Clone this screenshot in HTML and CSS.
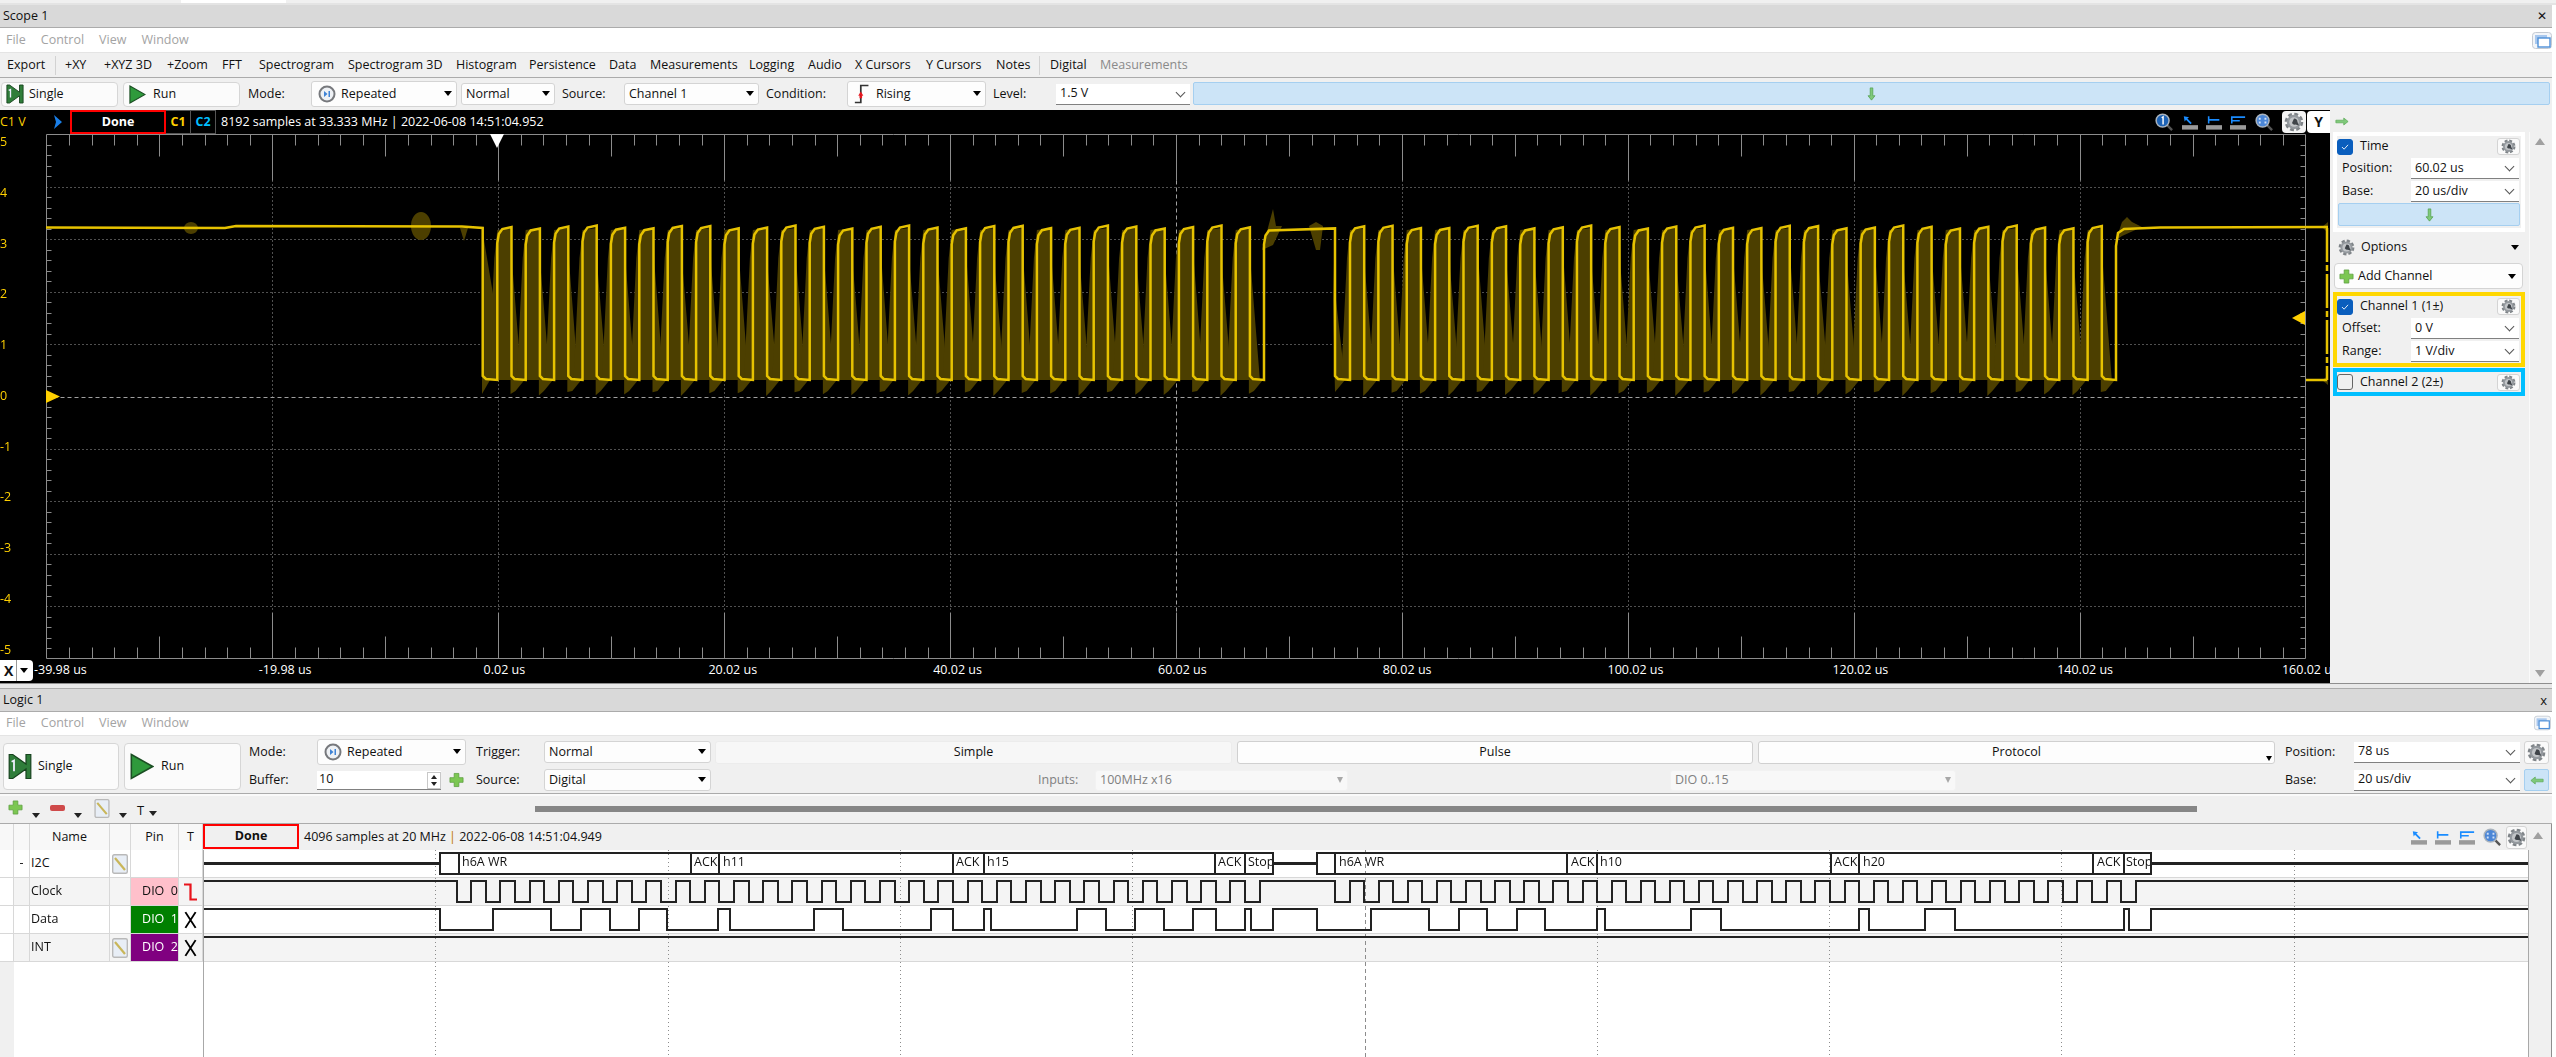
FILE: index.html
```html
<!DOCTYPE html>
<html>
<head>
  <title>Scope and Logic</title>
  <link rel="stylesheet" href="styles.css">
</head>
<body>
  <svg class="defs" width="0" height="0">
    <symbol id="gear" viewBox="0 0 20 20">
      <circle cx="10" cy="10" r="7.800" fill="none" stroke="#7f8488" stroke-width="3" stroke-dasharray="3.800 2.330"/>
      <circle cx="10" cy="10" r="7.200" fill="#94999e"/>
      <circle cx="10" cy="10" r="4.800" fill="#c2c5c8"/>
      <path d="M10 6.500a3.500 3.500 0 0 1 3.500 3.500l1.500 3.500-3.500-1a3 3 0 0 1-3.500-1.500z" fill="#3f4449"/>
    </symbol>
    <symbol id="plus" viewBox="0 0 16 16">
      <path d="M5.500 1h5v4.500h4.500v5h-4.500v4.500h-5v-4.500h-4.500v-5h4.500z" fill="#7cc752" stroke="#5a9c3c" stroke-width=".8"/>
    </symbol>
    <symbol id="arrow-down" viewBox="0 0 10 16">
      <path d="M3.500 1h3v9h2.500l-4 5-4-5h2.500z" fill="#7fc97a" stroke="#4f9e4a" stroke-width=".8"/>
    </symbol>
    <symbol id="arrow-side" viewBox="0 0 16 10">
      <path d="M1 3.500h9v-2.500l5 4-5 4v-2.500h-9z" fill="#7fc97a" stroke="#5aa955" stroke-width=".8"/>
    </symbol>
    <symbol id="single" viewBox="0 0 20 22">
      <path d="M1 1h3l11 8v-8h4v20h-4v-8l-11 8h-3z" fill="#2f7d3a" stroke="#17431e" stroke-width="1"/>
      <path d="M3 7l2-1v9" fill="none" stroke="#eef" stroke-width="1.500"/>
    </symbol>
    <symbol id="run" viewBox="0 0 18 20">
      <path d="M1 1l16 9-16 9z" fill="#2f9a3c" stroke="#1c4f24" stroke-width="1.200"/>
    </symbol>
    <symbol id="repeat" viewBox="0 0 18 18">
      <circle cx="9" cy="9" r="7.500" fill="#eef1f5" stroke="#77797d" stroke-width="2"/>
      <path d="M6 6l3.500 3-3.500 3z M10.500 6h1.500v6h-1.500z" fill="#3f83d6"/>
    </symbol>
    <symbol id="rising" viewBox="0 0 20 24">
      <path d="M1 22h7v-20h9" fill="none" stroke="#333" stroke-width="2"/>
      <path d="M8 9l3 5h-6z" fill="#e8141c"/>
      <path d="M6.500 14h3v3h-3z" fill="#e8141c"/>
    </symbol>
    <symbol id="pencil" viewBox="0 0 16 20">
      <rect x=".7" y=".7" width="14.600" height="18.600" rx="1.500" fill="#e8eef6" stroke="#b9b9b9" stroke-width="1.400"/>
      <path d="M3 4l10 12" stroke="#c9b65a" stroke-width="2.200"/>
    </symbol>
    <symbol id="zoom-in" viewBox="0 0 20 20">
      <path d="M12 12l6 6" stroke="#555" stroke-width="2.500"/>
      <circle cx="8" cy="8" r="6.800" fill="#1d62b5" stroke="#a9b3bd" stroke-width="1.600"/>
      <path d="M7 5l1.500-1v8" fill="none" stroke="#fff" stroke-width="1.500"/>
    </symbol>
    <symbol id="zoom-out" viewBox="0 0 20 20">
      <path d="M12 12l6 6" stroke="#555" stroke-width="2.500"/>
      <circle cx="8" cy="8" r="6.800" fill="#4b86d6" stroke="#a9b3bd" stroke-width="1.600"/>
      <path d="M4 5h2v2h-2z M10 5h2v2h-2z M4 9h2v2h-2z M10 9h2v2h-2z" fill="#cfe0f7"/>
    </symbol>
    <symbol id="ruler-arrow" viewBox="0 0 18 16">
      <path d="M0 11h18v5h-18z" fill="#9a9a9a"/>
      <path d="M2 1l6 1-2 1.500 5 5-1.500 1.500-5-5-1.500 2z" fill="#1a8cff"/>
    </symbol>
    <symbol id="ruler-one" viewBox="0 0 18 16">
      <path d="M0 11h18v5h-18z" fill="#9a9a9a"/>
      <path d="M3 1v8M3 5h12" stroke="#1a8cff" stroke-width="1.800"/>
    </symbol>
    <symbol id="ruler-two" viewBox="0 0 18 16">
      <path d="M0 11h18v5h-18z" fill="#9a9a9a"/>
      <path d="M2 1v8M2 2h15M2 6h9" stroke="#1a8cff" stroke-width="1.800"/>
    </symbol>
    <symbol id="windows" viewBox="0 0 20 17">
      <rect x=".5" y=".5" width="19" height="16" rx="3" fill="#f2f5f9" stroke="#c4cad2"/>
      <rect x="3" y="3" width="12" height="9" fill="#a9c8ee"/>
      <rect x="6" y="6" width="12" height="9" fill="#fff" stroke="#4d8fd8" stroke-width="1.400"/>
    </symbol>
    <symbol id="check" viewBox="0 0 16 16">
      <path d="M4.500 8l2.500 2.500 4.500-5" fill="none" stroke="#fff" stroke-width="1"/>
    </symbol>
    <symbol id="cross" viewBox="0 0 14 24" preserveAspectRatio="none">
      <path d="M1.500 1.500l11 21M12.500 1.500l-11 21" stroke="#000" stroke-width="2"/>
    </symbol>
    <symbol id="edge" viewBox="0 0 14 24" preserveAspectRatio="none">
      <path d="M0 2h7v20h7" fill="none" stroke="#e8141c" stroke-width="2.400"/>
    </symbol>
  </svg>

  <div class="top-strip"><span class="top-tab"></span></div>

  <section class="scope">
    <div class="title-bar"><span>Scope 1</span><span class="close-x">✕</span></div>
    <div class="menu-bar">
      <span>File</span><span>Control</span><span>View</span><span>Window</span>
      <svg class="windows-icon"><use href="#windows"/></svg>
    </div>
    <div class="tool-bar">
      <span class="sep-export">Export</span>
      <span>+XY</span><span>+XYZ 3D</span><span>+Zoom</span><span>FFT</span><span>Spectrogram</span>
      <span>Spectrogram 3D</span><span>Histogram</span><span>Persistence</span><span>Data</span>
      <span>Measurements</span><span>Logging</span><span>Audio</span><span>X Cursors</span>
      <span>Y Cursors</span><span class="sep-notes">Notes</span>
      <span>Digital</span><span class="muted">Measurements</span>
    </div>
    <div class="scope-controls">
      <button class="btn btn-single"><svg class="ico-single"><use href="#single"/></svg>Single</button>
      <button class="btn btn-run"><svg class="ico-run"><use href="#run"/></svg>Run</button>
      <span class="lbl lbl-mode">Mode:</span>
      <div class="combo combo-tall w-repeated"><svg class="ico-repeat"><use href="#repeat"/></svg>Repeated<i class="drop"></i></div>
      <div class="combo w-normal">Normal<i class="drop"></i></div>
      <span class="lbl lbl-source">Source:</span>
      <div class="combo w-source">Channel 1<i class="drop"></i></div>
      <span class="lbl lbl-cond">Condition:</span>
      <div class="combo combo-tall w-rising"><svg class="ico-rising"><use href="#rising"/></svg>Rising<i class="drop"></i></div>
      <span class="lbl lbl-level">Level:</span>
      <div class="field w-level">1.5 V<i class="chev"></i></div>
      <div class="blue-btn trigger-btn"><svg class="ico-down"><use href="#arrow-down"/></svg></div>
    </div>

    <div class="scope-body">
      <div class="plot-area">
        <div class="scope-status">
          <span class="unit">C1 V</span>
          <svg class="chevron" viewBox="0 0 12 14"><path d="M2 0l8 7-8 7 2-7z" fill="#1a7fe8"/></svg>
          <span class="done done-dark">Done</span>
          <span class="chan-tag c1">C1</span><span class="chan-tag c2">C2</span>
          <span class="status-text">8192 samples at 33.333 MHz | 2022-06-08 14:51:04.952</span>
          <div class="view-icons">
            <svg class="ico-zoom"><use href="#zoom-in"/></svg>
            <svg class="ico-ruler"><use href="#ruler-arrow"/></svg>
            <svg class="ico-ruler"><use href="#ruler-one"/></svg>
            <svg class="ico-ruler"><use href="#ruler-two"/></svg>
            <svg class="ico-zoom"><use href="#zoom-out"/></svg>
            <span class="tab-btn"><svg class="ico-gear-big"><use href="#gear"/></svg></span>
            <span class="tab-btn tab-y">Y</span>
          </div>
        </div>
        <canvas id="scopeCanvas" width="2330" height="526"></canvas>
        <div class="y-labels">
          <span>5</span><span>4</span><span>3</span><span>2</span><span>1</span><span>0</span>
          <span>-1</span><span>-2</span><span>-3</span><span>-4</span><span>-5</span>
        </div>
        <div class="x-labels">
          <span>-39.98 us</span><span>-19.98 us</span><span>0.02 us</span><span>20.02 us</span>
          <span>40.02 us</span><span>60.02 us</span><span>80.02 us</span><span>100.02 us</span>
          <span>120.02 us</span><span>140.02 us</span><span>160.02 us</span>
        </div>
        <div class="x-btn"><b>X</b><i class="drop"></i></div>
      </div>

      <aside class="side-panel">
        <div class="side-head"><svg class="ico-side"><use href="#arrow-side"/></svg></div>
        <div class="side-body">
          <div class="side-list">
            <div class="card card-time">
              <div class="card-head">
                <span class="check on"><svg><use href="#check"/></svg></span>
                <span>Time</span>
                <span class="gear-btn"><svg><use href="#gear"/></svg></span>
              </div>
              <div class="card-row"><span>Position:</span><div class="field">60.02 us<i class="chev"></i></div></div>
              <div class="card-row"><span>Base:</span><div class="field">20 us/div<i class="chev"></i></div></div>
              <div class="blue-btn time-btn"><svg class="ico-down"><use href="#arrow-down"/></svg></div>
            </div>
            <div class="options">
              <svg class="ico-options"><use href="#gear"/></svg><span>Options</span><i class="drop"></i>
            </div>
            <div class="add-channel">
              <svg class="ico-plus"><use href="#plus"/></svg><span>Add Channel</span><i class="drop"></i>
            </div>
            <div class="card card-c1">
              <div class="card-head">
                <span class="check on"><svg><use href="#check"/></svg></span>
                <span>Channel 1 (1±)</span>
                <span class="gear-btn"><svg><use href="#gear"/></svg></span>
              </div>
              <div class="card-row"><span>Offset:</span><div class="field">0 V<i class="chev"></i></div></div>
              <div class="card-row"><span>Range:</span><div class="field">1 V/div<i class="chev"></i></div></div>
            </div>
            <div class="card card-c2">
              <div class="card-head">
                <span class="check"></span>
                <span>Channel 2 (2±)</span>
                <span class="gear-btn"><svg><use href="#gear"/></svg></span>
              </div>
            </div>
          </div>
          <div class="scroll-col"><i class="tri-up"></i><i class="tri-down"></i></div>
        </div>
      </aside>
    </div>
    <div class="scope-foot"></div>
  </section>

  <section class="logic">
    <div class="title-bar"><span>Logic 1</span><span class="close-x close-small">x</span></div>
    <div class="menu-bar menu-logic">
      <span>File</span><span>Control</span><span>View</span><span>Window</span>
      <svg class="windows-icon windows-tall"><use href="#windows"/></svg>
    </div>
    <div class="logic-controls">
      <button class="btn big-btn col-single"><svg class="ico-single-big"><use href="#single"/></svg>Single</button>
      <button class="btn big-btn col-run"><svg class="ico-run-big"><use href="#run"/></svg>Run</button>
      <span class="lbl col-l1">Mode:</span>
      <div class="combo combo-tall col-c1"><svg class="ico-repeat"><use href="#repeat"/></svg>Repeated<i class="drop"></i></div>
      <span class="lbl col-l2">Trigger:</span>
      <div class="combo col-c2">Normal<i class="drop"></i></div>
      <div class="tab tab-off col-t1">Simple</div>
      <div class="tab col-t2">Pulse</div>
      <div class="tab col-t3">Protocol<i class="drop"></i></div>
      <span class="lbl col-l3">Position:</span>
      <div class="field col-f">78 us<i class="chev"></i></div>
      <span class="gear-btn gear-tall col-g"><svg><use href="#gear"/></svg></span>

      <span class="lbl col-l1 row-2">Buffer:</span>
      <div class="buffer col-c1 row-2">
        <div class="field spin">10<span class="spin-btns"><i class="up"></i><i class="dn"></i></span></div>
        <svg class="ico-plus-small"><use href="#plus"/></svg>
      </div>
      <span class="lbl col-l2 row-2">Source:</span>
      <div class="combo col-c2 row-2">Digital<i class="drop"></i></div>
      <div class="inputs row-2">
        <span class="lbl-off">Inputs:</span>
        <div class="combo combo-off w-inputs">100MHz x16<i class="drop"></i></div>
        <div class="combo combo-off w-dio">DIO 0..15<i class="drop"></i></div>
      </div>
      <span class="lbl col-l3 row-2">Base:</span>
      <div class="field col-f row-2">20 us/div<i class="chev"></i></div>
      <div class="blue-btn back-btn col-g row-2"><svg class="ico-side"><use href="#arrow-side"/></svg></div>
    </div>
    <div class="logic-tools">
      <svg class="ico-plus"><use href="#plus"/></svg><i class="mini-drop"></i>
      <span class="ico-minus"></span><i class="mini-drop"></i>
      <svg class="ico-pencil-lg"><use href="#pencil"/></svg><i class="mini-drop"></i>
      <span class="tool-t">T</span><i class="mini-drop mini-t"></i>
      <div class="h-track"></div>
    </div>

    <div class="logic-body">
      <div class="logic-main">
        <div class="logic-head">
          <span class="cell c-gut"></span><span class="cell c-exp"></span>
          <span class="cell c-name">Name</span><span class="cell c-edit"></span>
          <span class="cell c-pin">Pin</span><span class="cell c-trig">T</span>
          <span class="done">Done</span>
          <span class="status-text dark">4096 samples at 20 MHz <em>|</em> 2022-06-08 14:51:04.949</span>
          <div class="logic-icons">
            <svg class="ico-ruler"><use href="#ruler-arrow"/></svg>
            <svg class="ico-ruler"><use href="#ruler-one"/></svg>
            <svg class="ico-ruler"><use href="#ruler-two"/></svg>
            <svg class="ico-zoom"><use href="#zoom-out"/></svg>
            <span class="gear-btn gear-tall"><svg><use href="#gear"/></svg></span>
          </div>
        </div>
        <div class="logic-table">
          <div class="rows">
            <div class="row row-white">
              <span class="cell c-gut"></span><span class="cell c-exp">-</span>
              <span class="cell c-name left">I2C</span>
              <span class="cell c-edit"><svg class="ico-pencil"><use href="#pencil"/></svg></span>
              <span class="cell c-pin"></span><span class="cell c-trig"></span>
            </div>
            <div class="row row-grey">
              <span class="cell c-gut"></span><span class="cell c-exp"></span>
              <span class="cell c-name left">Clock</span><span class="cell c-edit"></span>
              <span class="cell c-pin pin-pink">DIO  0</span>
              <span class="cell c-trig"><svg class="ico-trig"><use href="#edge"/></svg></span>
            </div>
            <div class="row row-white">
              <span class="cell c-gut"></span><span class="cell c-exp"></span>
              <span class="cell c-name left">Data</span><span class="cell c-edit"></span>
              <span class="cell c-pin pin-green">DIO  1</span>
              <span class="cell c-trig"><svg class="ico-trig"><use href="#cross"/></svg></span>
            </div>
            <div class="row row-grey">
              <span class="cell c-gut"></span><span class="cell c-exp"></span>
              <span class="cell c-name left">INT</span>
              <span class="cell c-edit"><svg class="ico-pencil"><use href="#pencil"/></svg></span>
              <span class="cell c-pin pin-purple">DIO  2</span>
              <span class="cell c-trig"><svg class="ico-trig"><use href="#cross"/></svg></span>
            </div>
          </div>
          <div class="empty-rows"><span class="empty-gut"></span></div>
          <div class="logic-plot" id="logicPlot">
            <canvas id="logicCanvas" width="2325" height="207"></canvas>
          </div>
        </div>
      </div>
      <div class="scroll-col scroll-logic"><i class="tri-up"></i></div>
    </div>
  </section>

  <script src="script.js"></script>
</body>
</html>
```

FILE: styles.css
```css
* {
  box-sizing: border-box;
}

html, body {
  margin: 0;
  height: 1057px;
  overflow: hidden;
}

body {
  width: 2556px;
  background: #fff;
  color: #111;
  font-family: "Open Sans", "Noto Sans", sans-serif;
  font-size: 12.5px;
  line-height: 1;
}

.defs {
  position: absolute;
}

svg {
  display: block;
  flex: none;
}

i {
  display: block;
  flex: none;
}

.top-strip {
  height: 5px;
  background: #f0f0f0;
  border-bottom: 2px solid #e4e4e4;
  padding-left: 181px;
}

.top-tab {
  display: block;
  width: 105px;
  height: 3px;
  background: #fff;
}

.title-bar {
  height: 23px;
  width: 2552px;
  display: flex;
  align-items: center;
  justify-content: space-between;
  padding: 0 3px;
  background: #d9d9d9;
  border-bottom: 1px solid #ababab;
}

.close-x {
  font-size: 12px;
  margin-right: 2px;
}

.close-small {
  font-size: 13px;
}

.menu-bar {
  height: 25px;
  width: 2552px;
  display: flex;
  align-items: center;
  gap: 15px;
  padding: 1px 0 1px 6px;
  background: #fff;
  border-bottom: 1px solid #e4e4e4;
  color: #a3a3a3;
}

.menu-logic {
  height: 24px;
  padding-top: 0;
}

.windows-icon {
  width: 20px;
  height: 17px;
  margin-left: auto;
}

.windows-tall {
  width: 17px;
  height: 22px;
  margin-right: 1px;
}

.tool-bar {
  height: 25px;
  width: 2552px;
  display: grid;
  grid-template-columns: 58px 39px 63px 55px 37px 89px 108px 73px 80px 41px 99px 59px 47px 71px 70px 54px 50px 1fr;
  align-items: center;
  padding-left: 7px;
  background: #f0f0f0;
  border-bottom: 1px solid #ababab;
  white-space: nowrap;
}

.sep-export, .sep-notes {
  position: relative;
}

.sep-export::after, .sep-notes::after {
  content: "";
  position: absolute;
  top: -3px;
  width: 1px;
  height: 19px;
  background: #d2d2d2;
}

.sep-export::after { left: 48px; }
.sep-notes::after { left: 43px; }

.muted {
  color: #8a8a8a;
}

.scope-controls {
  height: 32px;
  width: 2552px;
  display: flex;
  align-items: center;
  padding-left: 1px;
  background: #f0f0f0;
  white-space: nowrap;
}

.btn {
  display: flex;
  align-items: center;
  gap: 5px;
  height: 25px;
  width: 117px;
  padding: 0 0 0 4px;
  background: #fbfbfb;
  border: 1px solid #d6d6d6;
  border-radius: 4px;
  font: inherit;
  color: inherit;
}

.btn-run {
  margin-left: 5px;
  gap: 7px;
  padding-left: 5px;
}

.ico-single {
  width: 18px;
  height: 20px;
}

.ico-run {
  width: 17px;
  height: 19px;
}

.lbl {
  white-space: nowrap;
}

.lbl-mode { margin-left: 8px; width: 63px; }
.lbl-source { margin-left: 7px; width: 62px; }
.lbl-cond { margin-left: 7px; width: 81px; }
.lbl-level { margin-left: 7px; width: 63px; }

.combo {
  position: relative;
  display: flex;
  align-items: center;
  gap: 5px;
  height: 22px;
  padding-left: 4px;
  background: #fdfdfd;
  border: 1px solid #d4d4d4;
  border-radius: 3px;
  flex: none;
}

.combo-tall {
  height: 26px;
  padding-left: 6px;
}

.drop {
  width: 0;
  height: 0;
  border-left: 4px solid transparent;
  border-right: 4px solid transparent;
  border-top: 5px solid #000;
}

.combo .drop {
  position: absolute;
  right: 4px;
  top: 50%;
  margin-top: -3px;
}

.w-repeated { width: 146px; }
.w-normal { width: 94px; margin-left: 4px; }
.w-source { width: 135px; }
.w-rising { width: 139px; }

.ico-repeat {
  width: 18px;
  height: 18px;
}

.ico-rising {
  width: 17px;
  height: 22px;
}

.field {
  position: relative;
  display: flex;
  align-items: center;
  height: 21px;
  padding-left: 4px;
  background: #fff;
  border-bottom: 1px solid #808080;
  flex: none;
}

.w-level {
  width: 134px;
  margin-right: 3px;
}

.chev {
  position: absolute;
  right: 6px;
  top: 5px;
  width: 7px;
  height: 7px;
  border-right: 1px solid #555;
  border-bottom: 1px solid #555;
  transform: rotate(45deg);
}

.blue-btn {
  display: flex;
  align-items: center;
  justify-content: center;
  background: #cce4f7;
  border: 1px solid #a5cff0;
  border-radius: 2px;
}

.trigger-btn {
  width: 1357px;
  height: 23px;
  margin-bottom: 1px;
}

.ico-down {
  width: 9px;
  height: 14px;
}

.scope-body {
  display: flex;
  height: 573px;
}

.plot-area {
  position: relative;
  width: 2330px;
  flex: none;
  background: #000;
  color: #fff;
  overflow: hidden;
}

.scope-status {
  height: 24px;
  display: flex;
  align-items: center;
  white-space: nowrap;
}

.unit {
  width: 52px;
  color: #ffd000;
}

.chevron {
  width: 12px;
  height: 14px;
  margin-right: 6px;
}

.done {
  display: flex;
  align-items: center;
  justify-content: center;
  font-weight: 700;
  border: 2px solid #f00;
  flex: none;
}

.done-dark {
  width: 96px;
  height: 24px;
  background: #000;
  color: #fff;
}

.chan-tag {
  width: 25px;
  height: 24px;
  display: flex;
  align-items: center;
  justify-content: center;
  font-weight: 700;
  border: 1px solid #555;
  border-left: 0;
}

.c1 { color: #ffd000; }
.c2 { color: #00bfff; }

.status-text {
  margin-left: 5px;
}

.view-icons {
  margin-left: auto;
  display: flex;
  align-items: center;
  height: 24px;
}

.ico-zoom {
  width: 19px;
  height: 19px;
}

.ico-ruler {
  width: 16px;
  height: 15px;
  margin-left: 8px;
}

.view-icons .ico-zoom:nth-child(5) {
  margin-left: 9px;
  margin-right: 8px;
}

.tab-btn {
  width: 24px;
  height: 22px;
  margin-right: 1px;
  display: flex;
  align-items: center;
  justify-content: center;
  background: #f4f4f4;
  border-radius: 4px;
}

.tab-y {
  width: 23px;
  margin-right: 0;
  background: #fff;
  color: #111;
  font-weight: 700;
  font-size: 14px;
  border-radius: 4px 0 0 4px;
}

.ico-gear-big {
  width: 20px;
  height: 20px;
}

#scopeCanvas {
  display: block;
}

.y-labels {
  position: absolute;
  left: 0;
  top: 26px;
  height: 520px;
  display: flex;
  flex-direction: column;
  justify-content: space-between;
  color: #ffd000;
}

.x-labels {
  display: grid;
  grid-template-columns: repeat(11, 224.800px);
  padding: 4px 0 0 34px;
  white-space: nowrap;
}

.x-btn {
  position: absolute;
  left: 0;
  bottom: 2px;
  width: 33px;
  height: 21px;
  display: flex;
  align-items: center;
  gap: 3px;
  padding-left: 4px;
  background: #fff;
  color: #111;
  border-radius: 0 4px 4px 0;
  font-size: 14px;
}

.x-btn b {
  width: 13px;
  border-right: 1px solid #999;
  line-height: 21px;
}

.side-panel {
  width: 222px;
  background: #f0f0f0;
}

.side-head {
  height: 22px;
  padding: 7px 0 0 5px;
}

.ico-side {
  width: 14px;
  height: 9px;
}

.side-body {
  display: flex;
  height: 551px;
}

.side-list {
  width: 192px;
  margin: 0 4px 0 3px;
}

.card {
  border: 4px solid #fff;
  background: #f0f0f0;
}

.card-time {
  height: 100px;
}

.card-c1 {
  height: 75px;
  margin-top: 3px;
  border-color: #ffd700;
}

.card-c2 {
  height: 28px;
  margin-top: 1px;
  border-color: #00bfff;
}

.card-head {
  height: 21px;
  display: flex;
  align-items: center;
  gap: 7px;
  white-space: nowrap;
}

.card-c2 .card-head {
  height: 20px;
}

.check {
  width: 16px;
  height: 16px;
  border-radius: 3px;
  border: 1px solid #666;
  flex: none;
}

.check.on {
  background: #0a5ebd;
  border-color: #0a5ebd;
}

.check svg {
  width: 14px;
  height: 14px;
}

.gear-btn {
  width: 23px;
  height: 17px;
  margin-left: auto;
  margin-right: 1px;
  display: flex;
  align-items: center;
  justify-content: center;
  background: #fafafa;
  border: 1px solid #d4d4d4;
  border-radius: 3px;
  flex: none;
}

.gear-btn svg {
  width: 15px;
  height: 15px;
}

.card-row {
  display: flex;
  align-items: center;
  height: 21px;
  margin-top: 2px;
  padding-left: 5px;
}

.card-head + .card-row {
  margin-top: 1px;
}

.card-row > span {
  width: 69px;
}

.card-row .field {
  width: 108px;
  padding-left: 4px;
}

.time-btn {
  width: 182px;
  height: 23px;
  margin: 1px 0 0 1px;
}

.options {
  height: 31px;
  display: flex;
  align-items: center;
  gap: 6px;
  padding: 0 0 0 5px;
}

.options .drop {
  margin-left: auto;
  margin-right: 6px;
}

.ico-options {
  width: 17px;
  height: 17px;
}

.add-channel {
  height: 26px;
  width: 189px;
  margin-left: 1px;
  display: flex;
  align-items: center;
  gap: 4px;
  padding: 0 6px 0 4px;
  background: #fdfdfd;
  border: 1px solid #d4d4d4;
  border-radius: 4px;
}

.add-channel .drop {
  margin-left: auto;
}

.ico-plus {
  width: 15px;
  height: 15px;
}

.scroll-col {
  position: relative;
  width: 23px;
  border-left: 1px solid #fafafa;
  background: #f0f0f0;
}

.tri-up, .tri-down {
  position: absolute;
  left: 5px;
  width: 0;
  height: 0;
  border-left: 5px solid transparent;
  border-right: 5px solid transparent;
}

.tri-up {
  top: 6px;
  border-bottom: 7px solid #a0a0a0;
}

.tri-down {
  bottom: 6px;
  border-top: 7px solid #a0a0a0;
}

.scope-foot {
  height: 6px;
  width: 2552px;
  background: #e8e8e8;
  border-top: 1px solid #8e8e8e;
  border-bottom: 1px solid #ababab;
}

.logic-controls {
  height: 58px;
  width: 2552px;
  display: grid;
  grid-template-columns: 116px 5px 117px 8px 68px 149px 10px 68px 167px 4px 517px 5px 516px 5px 517px 10px 69px 166px 4px 25px;
  grid-template-rows: 26px 26px;
  row-gap: 2px;
  align-items: center;
  padding: 3px 0 0 3px;
  background: #f0f0f0;
  border-bottom: 1px solid #ababab;
}

.big-btn {
  height: 47px;
  width: 100%;
  grid-row: 1 / 3;
  padding-left: 4px;
  gap: 6px;
}

.col-single { grid-column: 1; }
.col-run { grid-column: 3; padding-left: 5px; gap: 7px; }
.col-l1 { grid-column: 5; }
.col-c1 { grid-column: 6; }
.col-l2 { grid-column: 8; }
.col-c2 { grid-column: 9; }
.col-t1 { grid-column: 11; }
.col-t2 { grid-column: 13; }
.col-t3 { grid-column: 15; }
.col-l3 { grid-column: 17; }
.col-f { grid-column: 18; }
.col-g { grid-column: 20; }
.row-2 { grid-row: 2; }

.ico-single-big {
  width: 24px;
  height: 27px;
}

.ico-run-big {
  width: 24px;
  height: 27px;
}

.tab {
  position: relative;
  height: 23px;
  display: flex;
  align-items: center;
  justify-content: center;
  background: #fdfdfd;
  border: 1px solid #d0d0d0;
  border-radius: 3px;
}

.tab-off {
  background: #f7f7f7;
  border-color: #ececec;
}

.tab .drop {
  position: absolute;
  right: 2px;
  bottom: 2px;
  border-left-width: 3px;
  border-right-width: 3px;
  border-top-width: 5px;
}

.gear-tall {
  width: 25px;
  height: 23px;
  margin: 0;
}

.gear-tall svg {
  width: 19px;
  height: 19px;
}

.back-btn {
  height: 22px;
  width: 25px;
}

.back-btn .ico-side {
  transform: scaleX(-1);
}

.buffer {
  display: flex;
  align-items: center;
  gap: 8px;
}

.spin {
  width: 124px;
  height: 19px;
  padding-left: 2px;
}

.spin-btns {
  position: absolute;
  right: 0;
  top: 1px;
  width: 14px;
  height: 17px;
  display: flex;
  flex-direction: column;
  justify-content: space-between;
  align-items: center;
  padding: 2px 0;
  border: 1px solid #c8c8c8;
}

.spin-btns i {
  width: 0;
  height: 0;
  border-left: 3px solid transparent;
  border-right: 3px solid transparent;
}

.spin-btns .up { border-bottom: 4px solid #222; }
.spin-btns .dn { border-top: 4px solid #222; }

.ico-plus-small {
  width: 15px;
  height: 18px;
}

.inputs {
  grid-column: 11 / 16;
  display: flex;
  align-items: center;
  padding-left: 323px;
}

.lbl-off {
  width: 57px;
  color: #808080;
}

.combo-off {
  height: 21px;
  background: #f8f8f8;
  border-color: #f2f2f2;
  color: #808080;
}

.combo-off .drop {
  border-top-color: #a8a8a8;
  border-left-width: 3px;
  border-right-width: 3px;
  border-top-width: 6px;
}

.w-inputs { width: 253px; }
.w-dio { width: 286px; margin-left: 322px; }

.logic-tools {
  position: relative;
  height: 30px;
  width: 2552px;
  display: flex;
  align-items: flex-start;
  padding: 4px 0 0 8px;
  background: #f0f0f0;
  border-top: 2px solid #fafafa;
  border-bottom: 1px solid #ababab;
}

.mini-drop {
  width: 0;
  height: 0;
  margin: 13px 10px 0 9px;
  border-left: 4px solid transparent;
  border-right: 4px solid transparent;
  border-top: 5px solid #222;
}

.mini-t {
  margin-left: 5px;
  margin-top: 11px;
}

.ico-minus {
  width: 15px;
  height: 6px;
  margin-top: 5px;
  background: #cf4a4a;
  border-radius: 2px;
}

.ico-pencil-lg {
  width: 16px;
  height: 19px;
  margin-top: -1px;
  margin-left: 2px;
}

.tool-t {
  margin-top: 4px;
  font-size: 13px;
}

.h-track {
  position: absolute;
  left: 535px;
  top: 10px;
  width: 1662px;
  height: 6px;
  background: #868686;
}

.logic-body {
  display: flex;
  width: 2552px;
  height: 233px;
  border-right: 1px solid #8e8e8e;
  background: #f0f0f0;
}

.logic-main {
  width: 2529px;
  flex: none;
}

.logic-head {
  height: 26px;
  display: flex;
  align-items: center;
  white-space: nowrap;
}

.logic-head .cell {
  height: 26px;
  background: #f8f8f8;
}

.logic-head .done {
  width: 96px;
  height: 25px;
  align-self: flex-start;
}

.dark em {
  font-style: normal;
  color: #c07a00;
}

.logic-icons {
  margin-left: auto;
  display: flex;
  align-items: center;
  gap: 8px;
  padding-right: 2px;
}

.logic-icons .ico-ruler {
  margin: 0;
}

.logic-icons .gear-tall {
  margin-left: -4px;
  width: 21px;
}

.cell {
  display: flex;
  align-items: center;
  justify-content: center;
  height: 100%;
  border-right: 1px solid #d8d8d8;
  flex: none;
  white-space: pre;
  overflow: hidden;
}

.c-gut { width: 14px; border-right: 1px solid #d8d8d8; background: #fff; }
.c-exp { width: 16px; }
.c-name { width: 80px; }
.c-edit { width: 21px; }
.c-pin { width: 48px; }
.c-trig { width: 24px; }

.left {
  justify-content: flex-start;
  padding-left: 1px;
}

.logic-table {
  position: relative;
  height: 207px;
  display: flex;
  flex-direction: column;
  background: #fff;
}

.row {
  display: flex;
  height: 28px;
  border-bottom: 1px solid #d8d8d8;
}

.row-white {
  background: #fff;
}

.row-grey {
  background: #f4f4f4;
}

.pin-pink {
  justify-content: flex-end;
  background: #ffc0cb;
}

.pin-green {
  justify-content: flex-end;
  background: #008000;
  color: #fff;
}

.pin-purple {
  justify-content: flex-end;
  background: #800080;
  color: #fff;
}

.ico-pencil {
  width: 16px;
  height: 20px;
}

.ico-trig {
  width: 13px;
  height: 18px;
}

.empty-rows {
  flex: 1;
}

.empty-gut {
  display: block;
  width: 14px;
  height: 100%;
  background: #f0f0f0;
}

.logic-plot {
  position: absolute;
  left: 203px;
  top: 0;
  bottom: 0;
  width: 2326px;
  border-left: 1px solid #a8a8a8;
  border-right: 1px solid #a8a8a8;
  overflow: hidden;
}

#logicCanvas {
  display: block;
  margin-left: -1px;
}

.bus-label {
  position: absolute;
  top: 6px;
  overflow: hidden;
  white-space: nowrap;
}

.scroll-logic {
  flex: 1;
  border-left: 0;
}

.scroll-logic .tri-up {
  top: 8px;
  left: 4px;
}
```

FILE: script.js
```js
// Scope trace and logic traces
const GOLD = '#e6c200';
const SHADOW = '#4c3f00';
const GRID = '#8c8c8c';

function scopeEdges() {
  const pulses = [];
  for (let k = 0; k < 27; k++) {
    const r = 497.3 + 28.4 * k;
    pulses.push([r, r + 14.2]);
  }
  pulses.push([1264, 1335]);
  for (let k = 0; k < 27; k++) {
    const r = 1350 + 28.37 * k;
    pulses.push([r, r + 14.2]);
  }
  return pulses;
}

function drawScope() {
  const ctx = document.getElementById('scopeCanvas').getContext('2d');
  const L = 46.5, R = 2305.5, T = 134.5, B = 658.5;
  const divX = (R - L) / 10, divY = (B - T) / 10;
  ctx.translate(0, -134);

  // Frame and ticks
  ctx.strokeStyle = GRID;
  ctx.lineWidth = 1;
  function line(x1, y1, x2, y2) {
    ctx.beginPath();
    ctx.moveTo(x1, y1);
    ctx.lineTo(x2, y2);
    ctx.stroke();
  }
  line(L, T, R, T);
  line(L, B, R, B);
  line(L, T, L, B);
  line(R, T, R, B);
  for (let i = 1; i < 100; i++) {
    const x = Math.round(L + i * divX / 10) + 0.5;
    const len = i % 10 === 0 ? 46 : i % 5 === 0 ? 22 : 11;
    line(x, T, x, T + len);
    line(x, B, x, B - len);
  }
  for (let i = 1; i < 50; i++) {
    const y = Math.round(T + i * divY / 5) + 0.5;
    const len = i % 5 === 0 ? 0 : 5;
    line(L, y, L + len, y);
    line(R, y, R - len, y);
  }

  // Dotted grid
  ctx.strokeStyle = '#a0a0a0';
  for (let i = 1; i < 10; i++) {
    const x = Math.round(L + i * divX) + 0.5;
    const y = Math.round(T + i * divY) + 0.5;
    ctx.setLineDash(i === 5 ? [4, 3] : [1, 3]);
    line(x, T + 46, x, B - 46);
    line(L, y, R, y);
  }
  ctx.setLineDash([]);

  // Envelope
  const pulses = scopeEdges();
  const low = 380, high = 228;
  ctx.fillStyle = SHADOW;
  function poly(points) {
    ctx.beginPath();
    points.forEach((p, i) => i ? ctx.lineTo(p[0], p[1]) : ctx.moveTo(p[0], p[1]));
    ctx.closePath();
    ctx.fill();
  }
  pulses.forEach((p, i) => {
    const wobble = 4 * Math.sin(i * 2.3);
    if (p[1] - p[0] < 20) {
      poly([[p[0] - 9, low], [p[0] - 3, high + 30], [p[0], high + 2], [p[1], high], [p[1] + 1, high + 40 + wobble], [p[1] + 10, low]]);
      poly([[p[1] - 1, low - 2], [p[1] - 1, 394 + wobble / 2], [p[1] + 4, 391], [p[1] + 13, low]]);
    } else {
      poly([[p[0] - 2, 250], [p[0] + 9, 209], [p[0] + 12, 226], [p[0] + 18, 226], [p[0] + 9, 245]]);
      poly([[1309, 226], [1316, 222], [1323, 226], [1320, 250], [1316, 250]]);
      poly([[p[1], 226], [p[1] + 1, 300], [p[1] + 10, low], [p[1], 392], [p[1] - 2, 300]]);
    }
  });
  poly([[482, 228], [482, 394], [490, low], [494, 300]]);
  poly([[2116, 240], [2122, 222], [2127, 217], [2132, 222], [2142, 227], [2122, 236]]);
  poly([[460, 228], [464, 241], [468, 228]]);
  ctx.beginPath();
  ctx.ellipse(191, 228, 7, 6, 0, 0, Math.PI * 2);
  ctx.ellipse(421, 226, 10, 14, 0, 0, Math.PI * 2);
  ctx.fill();
  poly([[2322, 227], [2328, 222], [2328, 233]]);
  poly([[2322, 380], [2328, 376], [2328, 385]]);

  // Trace
  ctx.strokeStyle = GOLD;
  ctx.lineWidth = 2.5;
  ctx.beginPath();
  ctx.moveTo(46, 227.5);
  ctx.lineTo(225, 228);
  ctx.lineTo(236, 226);
  ctx.lineTo(462, 226.5);
  ctx.lineTo(482.7, 228);
  ctx.lineTo(482.7, low - 4);
  ctx.lineTo(486, low - 1);
  pulses.forEach((p, i) => {
    const top = high + 1.5 * Math.sin(i * 1.7) - 1;
    ctx.lineTo(p[0], low);
    ctx.lineTo(p[0], top + 16);
    ctx.lineTo(p[0] + 1.5, top + 7);
    ctx.lineTo(p[0] + 5, top + 2);
    ctx.lineTo(p[1], top);
    ctx.lineTo(p[1], low - 4);
    ctx.lineTo(p[1] + 3, low - 1);
  });
  ctx.lineTo(2116, low);
  ctx.lineTo(2116, 246);
  ctx.lineTo(2118, 233);
  ctx.lineTo(2124, 229);
  ctx.lineTo(2160, 227.5);
  ctx.lineTo(2328, 227);
  ctx.stroke();
  line(2306, 380, 2327, 380);
  ctx.setLineDash([34, 3, 6, 3]);
  line(2327, 228, 2327, 380);
  ctx.setLineDash([]);

  // Markers
  ctx.fillStyle = '#ffd000';
  poly([[2305, 311], [2305, 325], [2292, 318]]);
  poly([[46, 390], [46, 403], [60, 396.5]]);
  ctx.fillStyle = '#fff';
  poly([[490, 134], [504, 134], [497, 148]]);
}

function drawLogic() {
  const ctx = document.getElementById('logicCanvas').getContext('2d');
  const plot = document.getElementById('logicPlot');
  const X0 = 203, Y0 = 850, W = 2528;
  ctx.translate(-X0, -Y0);

  // Row lines are part of the table, so only the division lines are here
  ctx.strokeStyle = '#8c8c8c';
  ctx.lineWidth = 1;
  for (let i = 1; i < 10; i++) {
    const x = Math.round(X0 + i * 232.3) + 0.5;
    ctx.setLineDash(i === 5 ? [4, 3] : [1, 3]);
    ctx.beginPath();
    ctx.moveTo(x, Y0);
    ctx.lineTo(x, 1057);
    ctx.stroke();
  }
  ctx.setLineDash([]);

  ctx.strokeStyle = '#222';
  ctx.lineWidth = 2;

  // Step signal from its edge positions, starting high
  function steps(edges, yHigh, yLow) {
    let level = yHigh;
    ctx.beginPath();
    ctx.moveTo(X0, yHigh);
    edges.forEach(x => {
      const px = Math.round(x);
      ctx.lineTo(px, level);
      level = level === yHigh ? yLow : yHigh;
      ctx.lineTo(px, level);
    });
    ctx.lineTo(W, level);
    ctx.stroke();
  }

  const clock = [];
  for (let k = 0; k < 28; k++) {
    const f = 456.6 + 29.2 * k;
    clock.push(f, f + 14.5);
  }
  for (let k = 0; k < 28; k++) {
    const f = 1335 + 29.11 * k;
    clock.push(f, f + 14.7);
  }
  steps(clock, 881, 902);

  const data = [440, 493, 551, 581, 610, 639, 667, 718, 730, 814, 843, 931, 953, 984, 991, 1077,
    1106, 1135, 1164, 1193, 1216, 1245, 1251, 1273, 1317, 1371, 1429, 1459, 1487, 1517, 1545,
    1597, 1605, 1691, 1721, 1859, 1869, 1925, 1955, 2124, 2129, 2151];
  steps(data, 909, 930);

  // INT stays flat
  ctx.beginPath();
  ctx.moveTo(X0, 937);
  ctx.lineTo(W, 937);
  ctx.stroke();

  // I2C bus: idle lines and framed segments
  const TOP = 853, BOT = 874, MID = 863.5;
  const idle = [[X0, 440], [1273, 1317], [2151, W]];
  ctx.lineWidth = 3;
  idle.forEach(s => {
    ctx.beginPath();
    ctx.moveTo(s[0], MID);
    ctx.lineTo(s[1], MID);
    ctx.stroke();
  });
  ctx.lineWidth = 2;
  const frames = [[440, 1273], [1317, 2151]];
  frames.forEach(f => {
    ctx.strokeRect(f[0], TOP, f[1] - f[0], BOT - TOP);
  });
  [459, 691, 719, 953, 984, 1215, 1245, 1335, 1567, 1597, 1831, 1859, 2093, 2124].forEach(x => {
    ctx.beginPath();
    ctx.moveTo(x, TOP);
    ctx.lineTo(x, BOT);
    ctx.stroke();
  });

  const labels = [['h6A WR', 462, 90], ['ACK', 694, 24], ['h11', 723, 60], ['ACK', 956, 27], ['h15', 987, 60],
    ['ACK', 1218, 27], ['Stop', 1248, 24], ['h6A WR', 1339, 90], ['ACK', 1571, 25], ['h10', 1600, 60],
    ['ACK', 1834, 24], ['h20', 1863, 60], ['ACK', 2097, 26], ['Stop', 2126, 24]];
  labels.forEach(l => {
    const span = document.createElement('span');
    span.className = 'bus-label';
    span.textContent = l[0];
    span.style.left = (l[1] - X0 - 1) + 'px';
    span.style.width = l[2] + 'px';
    plot.appendChild(span);
  });
}

window.onload = function() {
  drawScope();
  drawLogic();
};
```
